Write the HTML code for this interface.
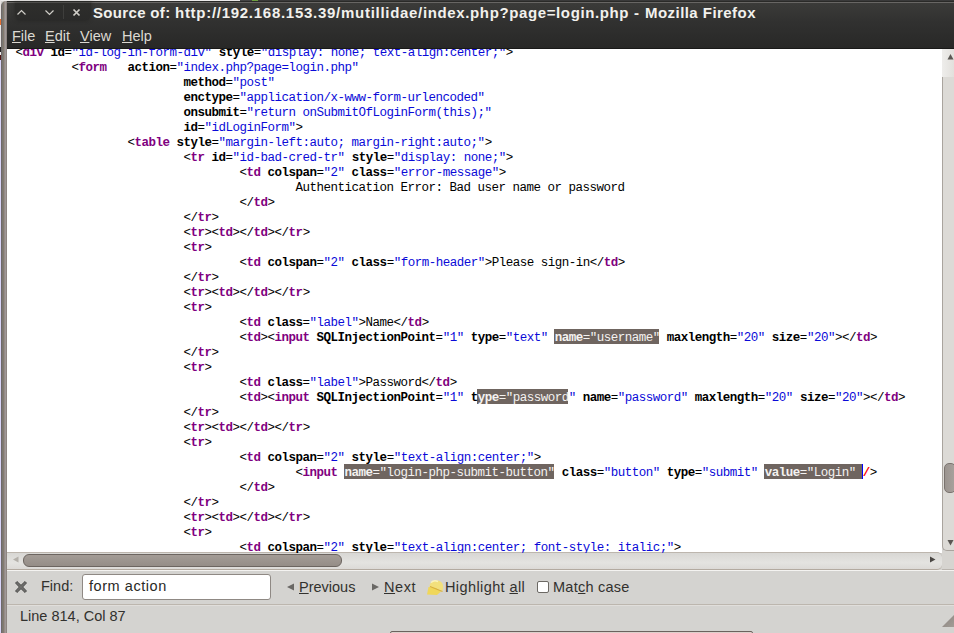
<!DOCTYPE html>
<html><head><meta charset="utf-8">
<style>
*{margin:0;padding:0;box-sizing:border-box}
html,body{width:954px;height:633px;overflow:hidden;background:#d4d3d0;position:relative;font-family:"Liberation Sans",sans-serif}
.abs{position:absolute}
#bgtop{left:0;top:0;width:954px;height:1px;background:linear-gradient(to right,#ecebea 0,#ecebea 240px,#444 240px,#444 252px,#6fa040 252px,#6fa040 258px,#3a3a3a 258px)}
#bgleft{left:0;top:0;width:1px;height:633px;background:linear-gradient(#e8e4e4 0,#e8e4e4 19px,#e87030 19px,#e87030 25px,#e8e6e6 25px,#e8e6e6 47px,#222 47px,#222 52px,#eee 52px,#eee 55px,#501010 55px,#501010 60px,#d8d4f8 60px)}
#lborder{left:1px;top:1px;width:6px;height:640px;background:linear-gradient(to right,#6f6868 0,#6f6868 1px,#787872 1px,#787872 2px,#857a70 2px,#857a70 3px,#938c88 3px,#938c88 4px,#a09898 4px,#a09898 5px,#8e8682 5px);border-top-left-radius:5px}
#head{left:7px;top:1px;width:947px;height:48px;background:linear-gradient(#2a2a28 0,#2a2a28 1px,#686664 1px,#686664 2px,#3b3b39 2px,#313130 21px,#282827 47px,#191918 47px)}
#btns{left:15px;top:3px;width:76px;height:18px;background:linear-gradient(#2e2e2c,#2a2a29);border-radius:0 0 6px 6px;box-shadow:0 0 3px 1px rgba(40,40,38,0.6)}
#sep{left:63px;top:5px;width:1px;height:14px;background:#3e3e3c}
.title{top:3px;height:20px;line-height:20px;font-weight:bold;font-size:15px;color:#f2f1ed;white-space:pre}
.menu{top:27px;height:18px;line-height:18px;font-size:14.5px;color:#dcd9d2;white-space:pre}
.menu u{text-decoration:underline;text-underline-offset:1px;text-decoration-thickness:1px}
#content{left:7px;top:49px;width:935px;height:504px;background:#fff;overflow:hidden}
#code{position:absolute;left:-7px;top:-49px;width:954px;height:633px}
.ln{position:absolute;height:15px;line-height:15px;white-space:pre;font-family:"Liberation Mono",monospace;font-size:12.5px;letter-spacing:-0.5px;color:#000;z-index:2}
.g{color:#800080;font-weight:bold}
.a{font-weight:bold}
.v{color:#0a0ad8}
.th,.gh,.ah,.vh{color:#f4f2f0}
.gh,.ah{font-weight:bold}
.err{color:#ff0000;font-weight:bold}
.caret{position:absolute;width:1px;height:15px;background:#0000ff;z-index:3}
.hl{position:absolute;height:15px;background:#6f6560;z-index:1}
#vscroll{left:942px;top:49px;width:12px;height:502px;background:#dcdad6;border-left:1px solid #a9a49e;border-bottom:1px solid #a9a49e;border-bottom-left-radius:5px}
#hscroll{left:7px;top:552px;width:935px;height:18px;background:linear-gradient(#d8d7d4,#e4e3e0 60%,#dcdad7);border-top:1px solid #bdb6ae;border-bottom:1px solid #b3aaa0;border-top-right-radius:5px;border-bottom-right-radius:5px}
#corner{left:942px;top:551px;width:12px;height:19px;background:#d6d4d0;border-bottom:1px solid #b9b4ae}
#vstep{left:942px;top:49px;width:12px;height:28px;background:linear-gradient(to right,#eeedeb,#e2e0dc)}
#vthumb{left:944px;top:463px;width:12px;height:30px;background:linear-gradient(to right,#9b948f,#a8a29d);border:1px solid #7a736e;border-radius:5px}
#hthumb{left:23px;top:554px;width:319px;height:13px;background:linear-gradient(#a39c96,#958d87);border:1px solid #6c6560;border-radius:6px}
#white1{left:7px;top:570px;width:947px;height:1px;background:#f4f3f1}
#findbar{left:7px;top:571px;width:947px;height:33px;background:#d4d3d0}
#sepline{left:7px;top:604px;width:947px;height:1px;background:#bcb6ae}
#status{left:7px;top:605px;width:947px;height:28px;background:#d4d3d0;border-top:1px solid #e0dedb}
.ui{font-size:14.5px;color:#32312e;white-space:pre;height:18px;line-height:18px}
#findinput{left:82px;top:574px;width:189px;height:26px;background:#fff;border:1px solid #8f8984;border-radius:3px}
#chk{left:537px;top:581px;width:12px;height:12px;background:#fff;border:1px solid #6c6964;border-radius:2px}
#tab{left:390px;top:631px;width:363px;height:10px;border:1px solid #6b625e;border-radius:2px;background:#ddd0cb}
</style></head><body>
<div class="abs" id="bgtop"></div>
<div class="abs" id="bgleft"></div>
<div class="abs" id="lborder"></div>
<div class="abs" id="head"></div>
<div class="abs" id="btns"></div>
<div class="abs" id="sep"></div>
<svg class="abs" style="left:15px;top:3px" width="76" height="19" viewBox="0 0 76 19">
 <path d="M2.5 11.5 L6.5 7.5 L10.5 11.5" fill="none" stroke="#d0cec8" stroke-width="1.2"/>
 <path d="M30.5 7.5 L34.5 11.5 L38.5 7.5" fill="none" stroke="#d0cec8" stroke-width="1.2"/>
 <path d="M58.5 6.5 L64.5 12.5 M64.5 6.5 L58.5 12.5" fill="none" stroke="#d0cec8" stroke-width="1.7"/>
</svg>
<div class="abs title" style="left:93px;letter-spacing:0.33px">Source of: </div>
<div class="abs title" style="left:175px;letter-spacing:0.72px">http://192.168.153.39/</div>
<div class="abs title" style="left:341px;letter-spacing:0.71px">mutillidae/</div>
<div class="abs title" style="left:423px;letter-spacing:0.62px">index.php?page=login.php</div>
<div class="abs title" style="left:634px">-</div>
<div class="abs title" style="left:645px;letter-spacing:0.45px">Mozilla Firefox</div>
<div class="abs menu" style="left:12px"><u>F</u>ile</div>
<div class="abs menu" style="left:45px"><u>E</u>dit</div>
<div class="abs menu" style="left:80px"><u>V</u>iew</div>
<div class="abs menu" style="left:122px"><u>H</u>elp</div>
<div class="abs" id="content"><div id="code">
<div class="ln" style="top:46px;left:15.5px">&lt;<span class="g">div</span> <span class="a">id</span>=<span class="v">&quot;id-log-in-form-div&quot;</span> <span class="a">style</span>=<span class="v">&quot;display: none; text-align:center;&quot;</span>&gt;</div>
<div class="ln" style="top:61px;left:71.5px">&lt;<span class="g">form</span>   <span class="a">action</span>=<span class="v">&quot;index.php?page=login.php&quot;</span></div>
<div class="ln" style="top:76px;left:183.5px"><span class="a">method</span>=<span class="v">&quot;post&quot;</span></div>
<div class="ln" style="top:91px;left:183.5px"><span class="a">enctype</span>=<span class="v">&quot;application/x-www-form-urlencoded&quot;</span></div>
<div class="ln" style="top:106px;left:183.5px"><span class="a">onsubmit</span>=<span class="v">&quot;return onSubmitOfLoginForm(this);&quot;</span></div>
<div class="ln" style="top:121px;left:183.5px"><span class="a">id</span>=<span class="v">&quot;idLoginForm&quot;</span>&gt;</div>
<div class="ln" style="top:136px;left:127.5px">&lt;<span class="g">table</span> <span class="a">style</span>=<span class="v">&quot;margin-left:auto; margin-right:auto;&quot;</span>&gt;</div>
<div class="ln" style="top:151px;left:183.5px">&lt;<span class="g">tr</span> <span class="a">id</span>=<span class="v">&quot;id-bad-cred-tr&quot;</span> <span class="a">style</span>=<span class="v">&quot;display: none;&quot;</span>&gt;</div>
<div class="ln" style="top:166px;left:239.5px">&lt;<span class="g">td</span> <span class="a">colspan</span>=<span class="v">&quot;2&quot;</span> <span class="a">class</span>=<span class="v">&quot;error-message&quot;</span>&gt;</div>
<div class="ln" style="top:181px;left:295.5px">Authentication Error: Bad user name or password</div>
<div class="ln" style="top:196px;left:239.5px">&lt;/<span class="g">td</span>&gt;</div>
<div class="ln" style="top:211px;left:183.5px">&lt;/<span class="g">tr</span>&gt;</div>
<div class="ln" style="top:226px;left:183.5px">&lt;<span class="g">tr</span>&gt;&lt;<span class="g">td</span>&gt;&lt;/<span class="g">td</span>&gt;&lt;/<span class="g">tr</span>&gt;</div>
<div class="ln" style="top:241px;left:183.5px">&lt;<span class="g">tr</span>&gt;</div>
<div class="ln" style="top:256px;left:239.5px">&lt;<span class="g">td</span> <span class="a">colspan</span>=<span class="v">&quot;2&quot;</span> <span class="a">class</span>=<span class="v">&quot;form-header&quot;</span>&gt;Please sign-in&lt;/<span class="g">td</span>&gt;</div>
<div class="ln" style="top:271px;left:183.5px">&lt;/<span class="g">tr</span>&gt;</div>
<div class="ln" style="top:286px;left:183.5px">&lt;<span class="g">tr</span>&gt;&lt;<span class="g">td</span>&gt;&lt;/<span class="g">td</span>&gt;&lt;/<span class="g">tr</span>&gt;</div>
<div class="ln" style="top:301px;left:183.5px">&lt;<span class="g">tr</span>&gt;</div>
<div class="ln" style="top:316px;left:239.5px">&lt;<span class="g">td</span> <span class="a">class</span>=<span class="v">&quot;label&quot;</span>&gt;Name&lt;/<span class="g">td</span>&gt;</div>
<div class="ln" style="top:331px;left:239.5px">&lt;<span class="g">td</span>&gt;&lt;<span class="g">input</span> <span class="a">SQLInjectionPoint</span>=<span class="v">&quot;1&quot;</span> <span class="a">type</span>=<span class="v">&quot;text&quot;</span> <span class="ah">name</span><span class="th">=</span><span class="vh">&quot;username&quot;</span> <span class="a">maxlength</span>=<span class="v">&quot;20&quot;</span> <span class="a">size</span>=<span class="v">&quot;20&quot;</span>&gt;&lt;/<span class="g">td</span>&gt;</div>
<div class="hl" style="top:329px;left:554px;width:105px"></div>
<div class="ln" style="top:346px;left:183.5px">&lt;/<span class="g">tr</span>&gt;</div>
<div class="ln" style="top:361px;left:183.5px">&lt;<span class="g">tr</span>&gt;</div>
<div class="ln" style="top:376px;left:239.5px">&lt;<span class="g">td</span> <span class="a">class</span>=<span class="v">&quot;label&quot;</span>&gt;Password&lt;/<span class="g">td</span>&gt;</div>
<div class="ln" style="top:391px;left:239.5px">&lt;<span class="g">td</span>&gt;&lt;<span class="g">input</span> <span class="a">SQLInjectionPoint</span>=<span class="v">&quot;1&quot;</span> <span class="a">t</span><span class="ah">ype</span><span class="th">=</span><span class="vh">&quot;password</span><span class="v">&quot;</span> <span class="a">name</span>=<span class="v">&quot;password&quot;</span> <span class="a">maxlength</span>=<span class="v">&quot;20&quot;</span> <span class="a">size</span>=<span class="v">&quot;20&quot;</span>&gt;&lt;/<span class="g">td</span>&gt;</div>
<div class="hl" style="top:389px;left:477px;width:91px"></div>
<div class="ln" style="top:406px;left:183.5px">&lt;/<span class="g">tr</span>&gt;</div>
<div class="ln" style="top:421px;left:183.5px">&lt;<span class="g">tr</span>&gt;&lt;<span class="g">td</span>&gt;&lt;/<span class="g">td</span>&gt;&lt;/<span class="g">tr</span>&gt;</div>
<div class="ln" style="top:436px;left:183.5px">&lt;<span class="g">tr</span>&gt;</div>
<div class="ln" style="top:451px;left:239.5px">&lt;<span class="g">td</span> <span class="a">colspan</span>=<span class="v">&quot;2&quot;</span> <span class="a">style</span>=<span class="v">&quot;text-align:center;&quot;</span>&gt;</div>
<div class="ln" style="top:466px;left:295.5px">&lt;<span class="g">input</span> <span class="ah">name</span><span class="th">=</span><span class="vh">&quot;login-php-submit-button&quot;</span> <span class="a">class</span>=<span class="v">&quot;button&quot;</span> <span class="a">type</span>=<span class="v">&quot;submit&quot;</span> <span class="ah">value</span><span class="th">=</span><span class="vh">&quot;Login&quot;</span><span class="th"> </span><span class="err">/</span>&gt;</div>
<div class="hl" style="top:464px;left:344px;width:210px"></div>
<div class="hl" style="top:464px;left:764px;width:98px"></div>
<div class="ln" style="top:481px;left:239.5px">&lt;/<span class="g">td</span>&gt;</div>
<div class="ln" style="top:496px;left:183.5px">&lt;/<span class="g">tr</span>&gt;</div>
<div class="ln" style="top:511px;left:183.5px">&lt;<span class="g">tr</span>&gt;&lt;<span class="g">td</span>&gt;&lt;/<span class="g">td</span>&gt;&lt;/<span class="g">tr</span>&gt;</div>
<div class="ln" style="top:526px;left:183.5px">&lt;<span class="g">tr</span>&gt;</div>
<div class="ln" style="top:541px;left:239.5px">&lt;<span class="g">td</span> <span class="a">colspan</span>=<span class="v">&quot;2&quot;</span> <span class="a">style</span>=<span class="v">&quot;text-align:center; font-style: italic;&quot;</span>&gt;</div>
<div class="caret" style="top:464px;left:862px"></div>
</div></div>
<div class="abs" id="vscroll"></div>
<svg class="abs" style="left:947px;top:539px" width="7" height="8"><path d="M0.5 1 L3.5 6.5 L6.5 1 Z" fill="#5a5753"/></svg>
<div class="abs" id="vstep"></div>
<svg class="abs" style="left:947px;top:53px" width="7" height="8"><path d="M0.5 6.5 L3.5 1 L6.5 6.5 Z" fill="#5a5753"/></svg>
<div class="abs" id="vthumb"></div>
<div class="abs" id="hscroll"></div>
<div class="abs" id="corner"></div>
<svg class="abs" style="left:12px;top:556px" width="8" height="8"><path d="M6.5 0.5 L1 3.5 L6.5 6.5 Z" fill="#b4b0aa"/></svg>
<svg class="abs" style="left:929px;top:556px" width="8" height="8"><path d="M1 0.5 L6.5 3.5 L1 6.5 Z" fill="#4a4744"/></svg>
<div class="abs" id="hthumb"></div>
<div class="abs" id="white1"></div>
<div class="abs" id="findbar"></div>
<svg class="abs" style="left:15px;top:581px" width="12" height="12" viewBox="0 0 12 12"><path d="M0.5 2 L2 0.5 L6 4.3 L10 0.5 L11.5 2 L7.7 6 L11.5 10 L10 11.5 L6 7.7 L2 11.5 L0.5 10 L4.3 6 Z" fill="#6e6e6c" stroke="#484846" stroke-width="0.9" stroke-linejoin="miter"/></svg>
<div class="abs ui" style="left:41px;top:577px">Find:</div>
<div class="abs" id="findinput"></div>
<div class="abs ui" style="left:89px;top:577px;color:#2a2926;letter-spacing:0.55px">form action</div>
<svg class="abs" style="left:286px;top:583px" width="9" height="9"><path d="M8 0.5 L1 4 L8 7.5 Z" fill="#6a6865"/></svg>
<div class="abs ui" style="left:299px;top:578px"><u>P</u>revious</div>
<svg class="abs" style="left:371px;top:583px" width="9" height="9"><path d="M1 0.5 L8 4 L1 7.5 Z" fill="#6a6865"/></svg>
<div class="abs ui" style="left:384px;top:578px;letter-spacing:0.6px"><u>N</u>ext</div>
<svg class="abs" style="left:425px;top:578px" width="20" height="19" viewBox="0 0 20 19"><path d="M2 16.5 L3.5 9 L11 9.5 L16 13.5 L12 17 Z" fill="#f0d75a"/><path d="M4.5 8.5 C4.5 3.5 10.5 1.5 14.5 3 C18.5 4.5 19 10 17.5 13 L11 10 Z" fill="#f2e07c"/><path d="M6 4.5 C8 2.5 11 2.5 13 3.5" stroke="#faf3c0" stroke-width="1.5" fill="none"/><path d="M5 8.5 L17.5 13.5" stroke="#d9b03a" stroke-width="1.1"/></svg>
<div class="abs ui" style="left:445px;top:578px;letter-spacing:0.4px">Highlight <u>a</u>ll</div>
<div class="abs" id="chk"></div>
<div class="abs ui" style="left:553px;top:578px;letter-spacing:0.25px">Mat<u>c</u>h case</div>
<div class="abs" id="sepline"></div>
<div class="abs" id="status"></div>
<div class="abs ui" style="left:20px;top:607px">Line 814, Col 87</div>
<div class="abs" id="tab"></div>
<svg class="abs" style="left:941px;top:614px" width="13" height="14"><defs><linearGradient id="gg" x1="0" y1="0" x2="1" y2="1"><stop offset="0" stop-color="#8a837d"/><stop offset="1" stop-color="#a39d97"/></linearGradient></defs><path d="M13 1 L13 13 L1 13 Z" fill="url(#gg)"/></svg>
</body></html>
